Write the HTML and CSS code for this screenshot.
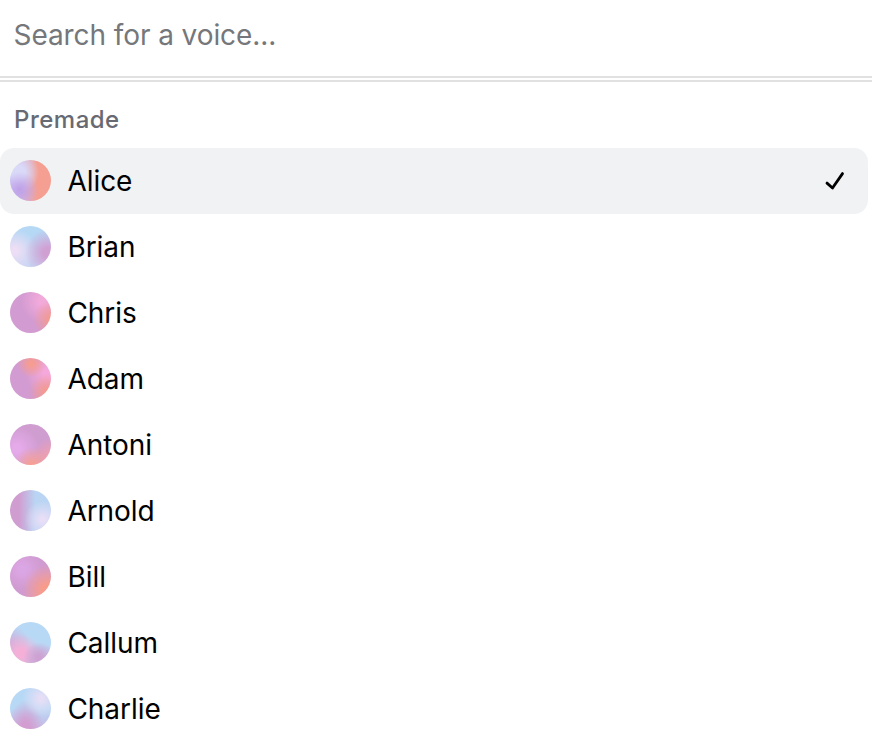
FILE: index.html
```html
<!DOCTYPE html>
<html lang="en">
<head>
<meta charset="utf-8">
<title>Voice picker</title>
<link rel="stylesheet" href="styles.css">
</head>
<body>
<main class="picker">
  <div class="search"><input class="search-input" type="text" placeholder="Search for a voice..." aria-label="Search for a voice"></div>
  <section class="group">
    <h2 class="group-title">Premade</h2>
    <ul class="voices">
      <li class="voice selected"><span class="orb alice"></span><span class="name">Alice</span>
        <svg class="check" viewBox="0 0 24 24" fill="none" stroke="currentColor" stroke-width="2.8" stroke-linecap="round" stroke-linejoin="round"><path d="M4 14.1L9.5 19L19.5 4.6"/></svg></li>
      <li class="voice"><span class="orb brian"></span><span class="name">Brian</span></li>
      <li class="voice"><span class="orb chris"></span><span class="name">Chris</span></li>
      <li class="voice"><span class="orb adam"></span><span class="name">Adam</span></li>
      <li class="voice"><span class="orb antoni"></span><span class="name">Antoni</span></li>
      <li class="voice"><span class="orb arnold"></span><span class="name">Arnold</span></li>
      <li class="voice"><span class="orb bill"></span><span class="name">Bill</span></li>
      <li class="voice"><span class="orb callum"></span><span class="name">Callum</span></li>
      <li class="voice"><span class="orb charlie"></span><span class="name">Charlie</span></li>
    </ul>
  </section>
</main>
</body>
</html>
```
FILE: styles.css
```css
* { box-sizing: border-box; }
body {
  margin: 0;
  background: #fff;
  color: #000;
  font-family: Inter, "Liberation Sans", sans-serif;
  overflow: hidden;
}
.picker { width: 872px; height: 744px; overflow: hidden; }
.search {
  height: 82px;
  border-bottom: 6px double #e1e1e1;
}
.search-input {
  display: block;
  width: 100%;
  height: 70px;
  padding: 0 13.5px;
  border: 0;
  outline: 0;
  background: transparent;
  font: 400 28px/34px Inter, "Liberation Sans", sans-serif;
  letter-spacing: -0.08px;
}
.search-input::placeholder { color: #75777b; opacity: 1; }
.group-title {
  margin: 0;
  height: 66px;
  padding: 22px 14px 0;
  font-size: 24px;
  line-height: 32px;
  font-weight: 500;
  letter-spacing: 0.5px;
  color: #686a73;
}
.voices { margin: 0; padding: 0; list-style: none; }
.voice {
  display: flex;
  align-items: center;
  width: 868px;
  height: 66px;
  padding: 0 21px 1px 10px;
  border-radius: 14px;
  font-size: 28px;
  line-height: 40px;
  letter-spacing: -0.04px;
}
.selected { background: #f1f2f4; }
.orb {
  width: 41px;
  height: 41px;
  margin-right: 16.4px;
  border-radius: 50%;
  flex: none;
}
.check { width: 24px; height: 24px; margin-left: auto; }

.alice {
  background:
    radial-gradient(circle at 24% 72%, #bea0e8 0, #bea0e800 42%),
    radial-gradient(circle at 20% 30%, #dadaf8 15%, #dadaf800 48%),
    linear-gradient(90deg, #cbbcf0 20%, #f59f92 66%);
}
.brian {
  background:
    radial-gradient(circle at 92% 65%, #d1a0d3 10%, #d1a0d300 50%),
    radial-gradient(circle at 12% 60%, #eedef5 5%, #eedef500 50%),
    linear-gradient(180deg, #b5d8f5 20%, #c8d5f3);
}
.chris {
  background:
    radial-gradient(circle at 102% 66%, #f49a91 5%, #f49a9100 38%),
    radial-gradient(circle at 80% 22%, #f2aadb 8%, #f2aadb00 48%),
    #d29bd1;
}
.adam {
  background:
    radial-gradient(circle at 52% 14%, #f69c91 5%, #f69c9100 34%),
    radial-gradient(circle at 90% 82%, #f49a91 5%, #f49a9100 36%),
    radial-gradient(circle at 93% 38%, #f5a8db 10%, #f5a8db00 50%),
    #d29bd1;
}
.antoni {
  background:
    radial-gradient(circle at 54% 100%, #f6a095 5%, #f6a09500 38%),
    radial-gradient(circle at 100% 80%, #ef9fae 5%, #ef9fae00 36%),
    radial-gradient(circle at 17% 60%, #e5aaea 8%, #e5aaea00 52%),
    #d09dd1;
}
.arnold {
  background:
    radial-gradient(circle at 80% 72%, #e8def7 5%, #e8def700 42%),
    linear-gradient(90deg, #d09dd1 22%, #b9d5f3 62%);
}
.bill {
  background:
    radial-gradient(circle at 92% 84%, #f79c8c 12%, #f79c8c00 50%),
    radial-gradient(circle at 30% 32%, #dba6e4 8%, #dba6e400 50%),
    #d09bd0;
}
.callum {
  background:
    radial-gradient(circle at 70% 86%, #cda2d2 5%, #cda2d200 34%),
    radial-gradient(circle at 27% 75%, #f5b0d8 10%, #f5b0d800 45%),
    radial-gradient(circle at 0 55%, #cbaedb 5%, #cbaedb00 42%),
    linear-gradient(180deg, #b8d9f5 55%, #cdb4df);
}
.charlie {
  background:
    radial-gradient(circle at 76% 26%, #e6def6 5%, #e6def600 42%),
    radial-gradient(ellipse at 38% 100%, #d39dd1 12%, #d39dd100 50%),
    linear-gradient(180deg, #b8d9f5 50%, #c9b8e4);
}
```
